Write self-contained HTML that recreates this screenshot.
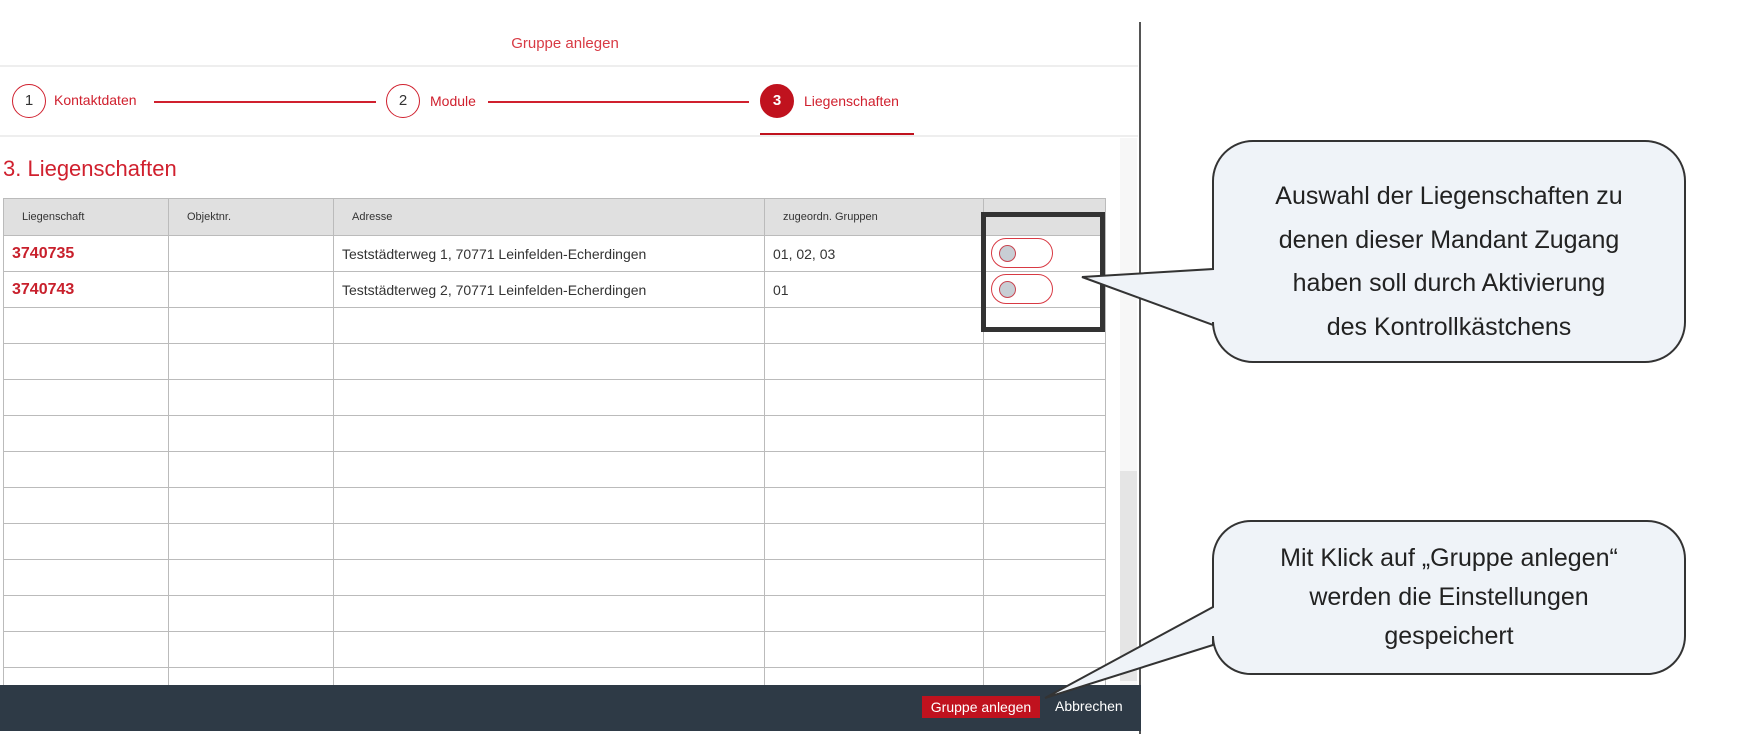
<!DOCTYPE html>
<html><head><meta charset="utf-8"><style>
*{margin:0;padding:0;box-sizing:border-box}
body{width:1750px;height:745px;background:#fff;position:relative;overflow:hidden;font-family:"Liberation Sans",sans-serif}
.a{position:absolute}
.red{color:#d0202e}
.circ{position:absolute;width:34px;height:34px;border:1.5px solid #d0202e;border-radius:50%;text-align:center;line-height:31px;font-size:15px;color:#333}
.hl{position:absolute;height:1.5px;background:#d0202e}
table{position:absolute;left:3px;top:198px;border-collapse:collapse;width:1103px;table-layout:fixed}
td,th{border:1px solid #bbb;height:36px;font-size:14px;color:#333;text-align:left;font-weight:normal;padding-left:8px;white-space:nowrap;overflow:hidden}
th{background:#e0e0e0;height:37px;font-size:11px;padding-left:18px}
td.id{color:#c8202c;font-weight:bold;font-size:16px}
.tog{position:absolute;left:991px;width:62px;height:30px;border:1.5px solid #d83a44;border-radius:15px;background:#fff}
.tog::after{content:"";position:absolute;left:7px;top:6px;width:15px;height:15px;border-radius:50%;background:#c8ced4;border:1.5px solid #c84450}
</style></head><body>
<div class="a" style="left:1139px;top:22px;width:2px;height:712px;background:#555"></div>
<div class="a red" style="left:0;width:1130px;top:35px;text-align:center;font-size:15px;color:#d83a44">Gruppe anlegen</div>
<div class="a" style="left:0;top:65px;width:1138px;height:2px;background:#eee"></div>
<div class="circ" style="left:12px;top:84px">1</div>
<div class="a red" style="left:54px;top:92px;font-size:14px">Kontaktdaten</div>
<div class="hl" style="left:154px;width:222px;top:101px"></div>
<div class="circ" style="left:386px;top:84px">2</div>
<div class="a red" style="left:430px;top:93px;font-size:14px">Module</div>
<div class="hl" style="left:488px;width:261px;top:101px"></div>
<div class="circ" style="left:760px;top:84px;background:#c0121e;border-color:#c0121e;color:#fff;font-weight:bold">3</div>
<div class="a red" style="left:804px;top:93px;font-size:14px">Liegenschaften</div>
<div class="a" style="left:760px;top:133px;width:154px;height:3px;background:#c0121e"></div>
<div class="a" style="left:0;top:135px;width:1138px;height:2px;background:#eee"></div>
<div class="a red" style="left:3px;top:156px;font-size:22px">3. Liegenschaften</div>
<div class="a" style="left:1120px;top:138px;width:17px;height:548px;background:#f7f7f7"></div>
<div class="a" style="left:1120px;top:471px;width:17px;height:210px;background:#e5e5e5"></div>
<table>
<colgroup><col style="width:165px"><col style="width:165px"><col style="width:431px"><col style="width:219px"><col></colgroup>
<tr><th>Liegenschaft</th><th>Objektnr.</th><th>Adresse</th><th>zugeordn. Gruppen</th><th></th></tr>
<tr><td class="id">3740735</td><td></td><td>Teststädterweg 1, 70771 Leinfelden-Echerdingen</td><td>01, 02, 03</td><td></td></tr>
<tr><td class="id">3740743</td><td></td><td>Teststädterweg 2, 70771 Leinfelden-Echerdingen</td><td>01</td><td></td></tr>
<tr><td></td><td></td><td></td><td></td><td></td></tr>
<tr><td></td><td></td><td></td><td></td><td></td></tr>
<tr><td></td><td></td><td></td><td></td><td></td></tr>
<tr><td></td><td></td><td></td><td></td><td></td></tr>
<tr><td></td><td></td><td></td><td></td><td></td></tr>
<tr><td></td><td></td><td></td><td></td><td></td></tr>
<tr><td></td><td></td><td></td><td></td><td></td></tr>
<tr><td></td><td></td><td></td><td></td><td></td></tr>
<tr><td></td><td></td><td></td><td></td><td></td></tr>
<tr><td></td><td></td><td></td><td></td><td></td></tr>
<tr><td></td><td></td><td></td><td></td><td></td></tr>
</table>
<div class="tog" style="top:238px"></div>
<div class="tog" style="top:274px"></div>
<div class="a" style="left:981px;top:212px;width:124px;height:120px;border:5px solid #333"></div>
<div class="a" style="left:0;top:685px;width:1141px;height:46px;background:#2e3a46"></div>
<div class="a" style="left:922px;top:696px;width:118px;height:22px;background:#c0121e;color:#fff;font-size:14px;text-align:center;line-height:22px">Gruppe anlegen</div>
<div class="a" style="left:1055px;top:698px;color:#fff;font-size:14px">Abbrechen</div>
<svg class="a" style="left:0;top:0" width="1750" height="745">
<path d="M1253 141 H1645 A40 40 0 0 1 1685 181 V322 A40 40 0 0 1 1645 362 H1253 A40 40 0 0 1 1213 322 V325 L1082 277 L1213 269 V181 A40 40 0 0 1 1253 141 Z" fill="#eff3f8" stroke="#333" stroke-width="2"/>
<path d="M1253 521 H1645 A38 38 0 0 1 1685 559 V636 A38 38 0 0 1 1645 674 H1253 A38 38 0 0 1 1213 636 V645 L1045 698 L1213 607 V559 A38 38 0 0 1 1253 521 Z" fill="#eff3f8" stroke="#333" stroke-width="2"/>
<g font-family="Liberation Sans, sans-serif" font-size="25" fill="#222" text-anchor="middle">
<text x="1449" y="204">Auswahl der Liegenschaften zu</text>
<text x="1449" y="248">denen dieser Mandant Zugang</text>
<text x="1449" y="291">haben soll durch Aktivierung</text>
<text x="1449" y="335">des Kontrollkästchens</text>
<text x="1449" y="566">Mit Klick auf „Gruppe anlegen“</text>
<text x="1449" y="605">werden die Einstellungen</text>
<text x="1449" y="644">gespeichert</text>
</g>
</svg>
</body></html>
